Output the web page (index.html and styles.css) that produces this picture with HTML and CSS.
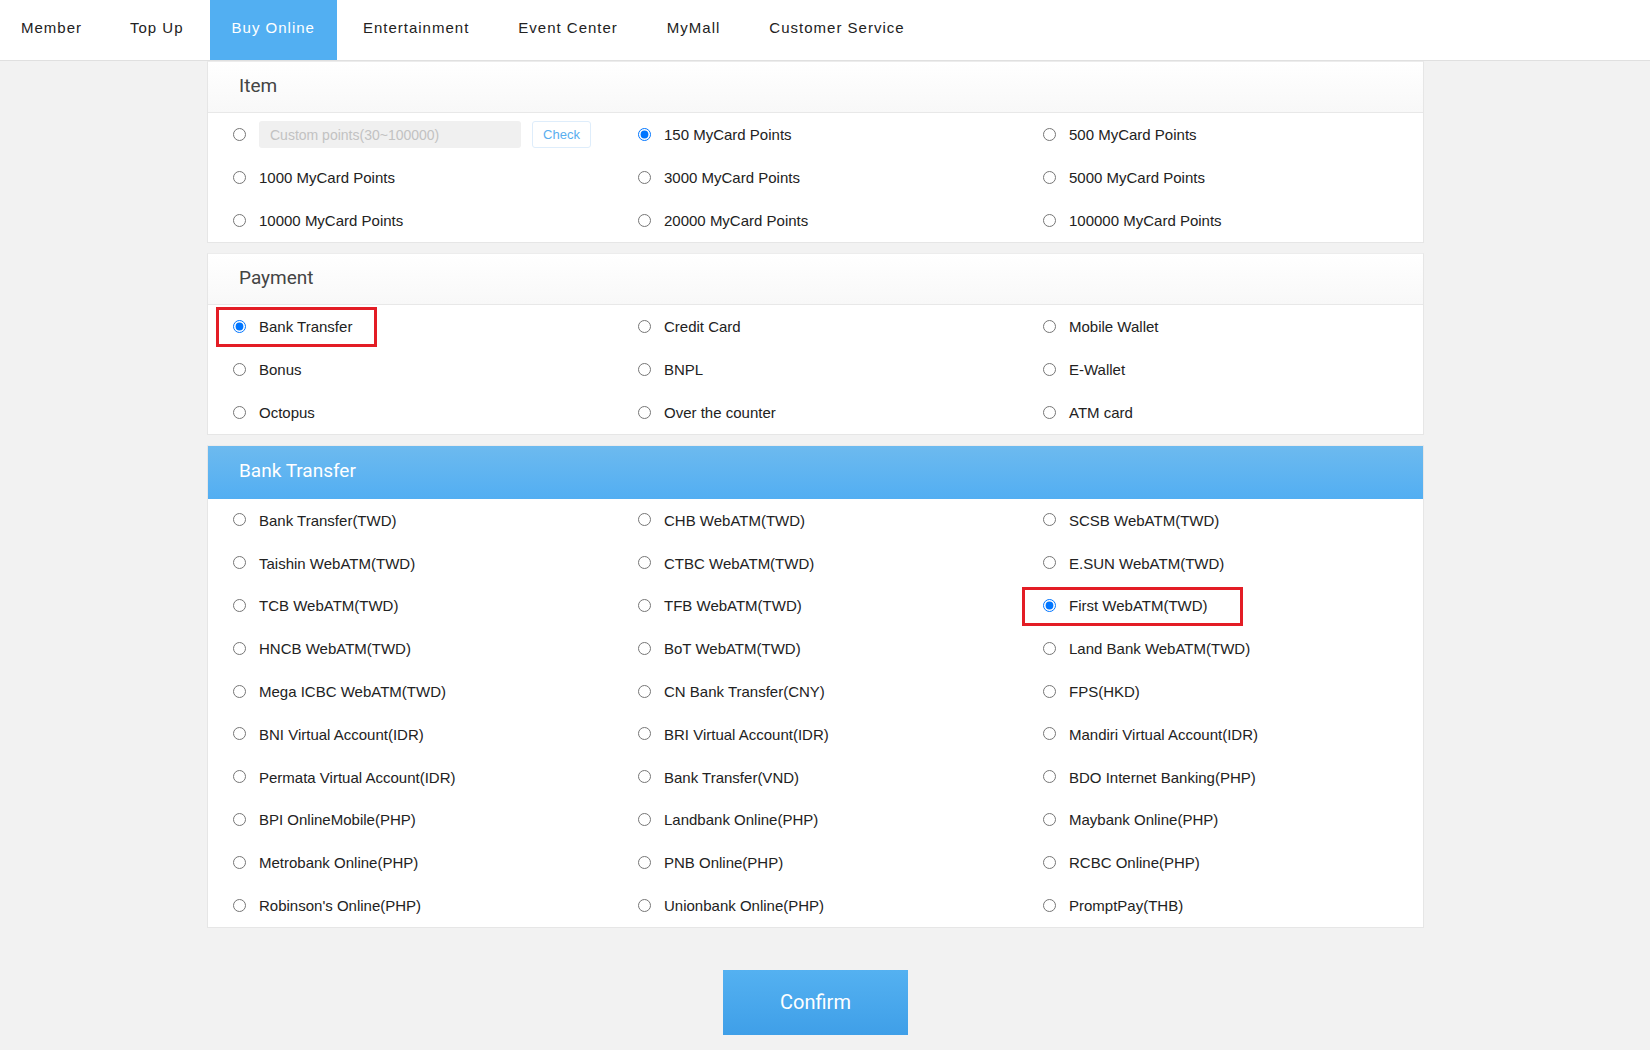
FILE: index.html
```html
<!DOCTYPE html>
<html lang="en">
<head>
    <meta charset="UTF-8">
    <title>Buy Online - MyCard</title>
    <link rel="stylesheet" href="styles.css">
</head>
<body>
    <!-- Top navigation -->
    <nav class="top-nav">
        <a href="#" class="nav-item">Member</a>
        <a href="#" class="nav-item">Top Up</a>
        <a href="#" class="nav-item active">Buy Online</a>
        <a href="#" class="nav-item">Entertainment</a>
        <a href="#" class="nav-item">Event Center</a>
        <a href="#" class="nav-item">MyMall</a>
        <a href="#" class="nav-item">Customer Service</a>
    </nav>

    <div class="content">
        <div class="main">
            <!-- Item -->
            <section class="panel">
                <div class="panel-head">Item</div>
                <div class="option-grid">
                    <label class="option">
                        <input type="radio" name="item">
                        <input type="text" class="custom-input" placeholder="Custom points(30~100000)" disabled>
                        <button class="check-btn" type="button">Check</button>
                    </label>
                    <label class="option"><input type="radio" name="item" checked>150 MyCard Points</label>
                    <label class="option"><input type="radio" name="item">500 MyCard Points</label>
                    <label class="option"><input type="radio" name="item">1000 MyCard Points</label>
                    <label class="option"><input type="radio" name="item">3000 MyCard Points</label>
                    <label class="option"><input type="radio" name="item">5000 MyCard Points</label>
                    <label class="option"><input type="radio" name="item">10000 MyCard Points</label>
                    <label class="option"><input type="radio" name="item">20000 MyCard Points</label>
                    <label class="option"><input type="radio" name="item">100000 MyCard Points</label>
                </div>
            </section>

            <!-- Payment -->
            <section class="panel">
                <div class="panel-head">Payment</div>
                <div class="option-grid">
                    <label class="option"><input type="radio" name="pay" checked>Bank Transfer<span class="mark mark-pay"></span></label>
                    <label class="option"><input type="radio" name="pay">Credit Card</label>
                    <label class="option"><input type="radio" name="pay">Mobile Wallet</label>
                    <label class="option"><input type="radio" name="pay">Bonus</label>
                    <label class="option"><input type="radio" name="pay">BNPL</label>
                    <label class="option"><input type="radio" name="pay">E-Wallet</label>
                    <label class="option"><input type="radio" name="pay">Octopus</label>
                    <label class="option"><input type="radio" name="pay">Over the counter</label>
                    <label class="option"><input type="radio" name="pay">ATM card</label>
                </div>
            </section>

            <!-- Bank Transfer -->
            <section class="panel panel-blue">
                <div class="panel-head">Bank Transfer</div>
                <div class="option-grid bank-grid">
                    <label class="option"><input type="radio" name="bank">Bank Transfer(TWD)</label>
                    <label class="option"><input type="radio" name="bank">CHB WebATM(TWD)</label>
                    <label class="option"><input type="radio" name="bank">SCSB WebATM(TWD)</label>
                    <label class="option"><input type="radio" name="bank">Taishin WebATM(TWD)</label>
                    <label class="option"><input type="radio" name="bank">CTBC WebATM(TWD)</label>
                    <label class="option"><input type="radio" name="bank">E.SUN WebATM(TWD)</label>
                    <label class="option"><input type="radio" name="bank">TCB WebATM(TWD)</label>
                    <label class="option"><input type="radio" name="bank">TFB WebATM(TWD)</label>
                    <label class="option"><input type="radio" name="bank" checked>First WebATM(TWD)<span class="mark mark-bank"></span></label>
                    <label class="option"><input type="radio" name="bank">HNCB WebATM(TWD)</label>
                    <label class="option"><input type="radio" name="bank">BoT WebATM(TWD)</label>
                    <label class="option"><input type="radio" name="bank">Land Bank WebATM(TWD)</label>
                    <label class="option"><input type="radio" name="bank">Mega ICBC WebATM(TWD)</label>
                    <label class="option"><input type="radio" name="bank">CN Bank Transfer(CNY)</label>
                    <label class="option"><input type="radio" name="bank">FPS(HKD)</label>
                    <label class="option"><input type="radio" name="bank">BNI Virtual Account(IDR)</label>
                    <label class="option"><input type="radio" name="bank">BRI Virtual Account(IDR)</label>
                    <label class="option"><input type="radio" name="bank">Mandiri Virtual Account(IDR)</label>
                    <label class="option"><input type="radio" name="bank">Permata Virtual Account(IDR)</label>
                    <label class="option"><input type="radio" name="bank">Bank Transfer(VND)</label>
                    <label class="option"><input type="radio" name="bank">BDO Internet Banking(PHP)</label>
                    <label class="option"><input type="radio" name="bank">BPI OnlineMobile(PHP)</label>
                    <label class="option"><input type="radio" name="bank">Landbank Online(PHP)</label>
                    <label class="option"><input type="radio" name="bank">Maybank Online(PHP)</label>
                    <label class="option"><input type="radio" name="bank">Metrobank Online(PHP)</label>
                    <label class="option"><input type="radio" name="bank">PNB Online(PHP)</label>
                    <label class="option"><input type="radio" name="bank">RCBC Online(PHP)</label>
                    <label class="option"><input type="radio" name="bank">Robinson's Online(PHP)</label>
                    <label class="option"><input type="radio" name="bank">Unionbank Online(PHP)</label>
                    <label class="option"><input type="radio" name="bank">PromptPay(THB)</label>
                </div>
            </section>

            <div class="actions">
                <button class="confirm-btn" type="button">Confirm</button>
            </div>
        </div>
    </div>
</body>
</html>
```

FILE: styles.css
```css
* {
    margin: 0;
    padding: 0;
    box-sizing: border-box;
}

html {
    overflow: hidden;
}

body {
    background-color: #f2f2f2;
    font-family: Arial, "Liberation Sans", Helvetica, sans-serif;
    color: #222;
}

/* Top navigation */
.top-nav {
    display: flex;
    gap: 4px;
    height: 61px;
    background-color: #fff;
    border-bottom: 1px solid #e0e0e0;
}

.nav-item {
    display: flex;
    align-items: center;
    padding: 0 22px 5px;
    height: 60px;
    font-size: 15px;
    letter-spacing: 1px;
    color: #222;
    text-decoration: none;
}

.nav-item:first-child {
    padding-left: 21px;
}

.nav-item:nth-child(n+5) {
    margin-left: 1px;
}

.nav-item.active {
    background-color: #52aff2;
    color: #fff;
}

/* Content */
.content {
    padding-right: 19px;
}

.main {
    width: 1217px;
    margin: 0 auto;
}

.panel {
    background-color: #fff;
    border: 1px solid #e6e6e6;
    border-top-color: #ececec;
    margin-bottom: 10px;
}

.panel-head {
    height: 51px;
    padding: 0 0 3px 31px;
    display: flex;
    align-items: center;
    font-family: Roboto, "Liberation Sans", sans-serif;
    font-size: 19px;
    color: #444;
    background: linear-gradient(#ffffff, #f8f8f8);
    border-bottom: 1px solid #e8e8e8;
}

.panel-blue .panel-head {
    height: 53px;
    padding-bottom: 5px;
    color: #fff;
    background: linear-gradient(#6dbaef, #52aef2);
    border-bottom: none;
}

.option-grid {
    display: grid;
    grid-template-columns: repeat(3, 1fr);
    grid-auto-rows: 43px;
}

.bank-grid {
    grid-auto-rows: 42.8px;
}

.option {
    position: relative;
    display: flex;
    align-items: center;
    padding-left: 25px;
    font-size: 15px;
    color: #222;
}

.option input[type="radio"] {
    width: 13px;
    height: 13px;
    margin: 0 13px 1px 0;
    flex-shrink: 0;
}

.custom-input {
    width: 262px;
    height: 27px;
    padding-left: 11px;
    border: none;
    border-radius: 3px;
    background-color: #f0f0f0;
    font-family: Arial, "Liberation Sans", sans-serif;
    font-size: 14px;
}

.custom-input::placeholder {
    color: #c2c2c2;
}

.check-btn {
    width: 59px;
    height: 27px;
    margin-left: 11px;
    border: 1px solid #deedfb;
    border-radius: 3px;
    background-color: #fff;
    color: #5aaeef;
    font-family: Arial, "Liberation Sans", sans-serif;
    font-size: 13px;
}

/* Red annotation boxes */
.mark {
    position: absolute;
    border: 3px solid #e31d25;
    pointer-events: none;
}

.mark-pay {
    left: 8px;
    top: 2px;
    width: 161px;
    height: 40px;
}

.mark-bank {
    left: 4px;
    top: 2px;
    width: 221px;
    height: 39px;
}

.actions {
    display: flex;
    justify-content: center;
    padding-top: 32px;
}

.confirm-btn {
    width: 185px;
    height: 65px;
    border: none;
    background: linear-gradient(#54b1f1, #3f9fe8);
    color: #fff;
    font-family: Roboto, "Liberation Sans", sans-serif;
    font-size: 20px;
    cursor: pointer;
}
```
